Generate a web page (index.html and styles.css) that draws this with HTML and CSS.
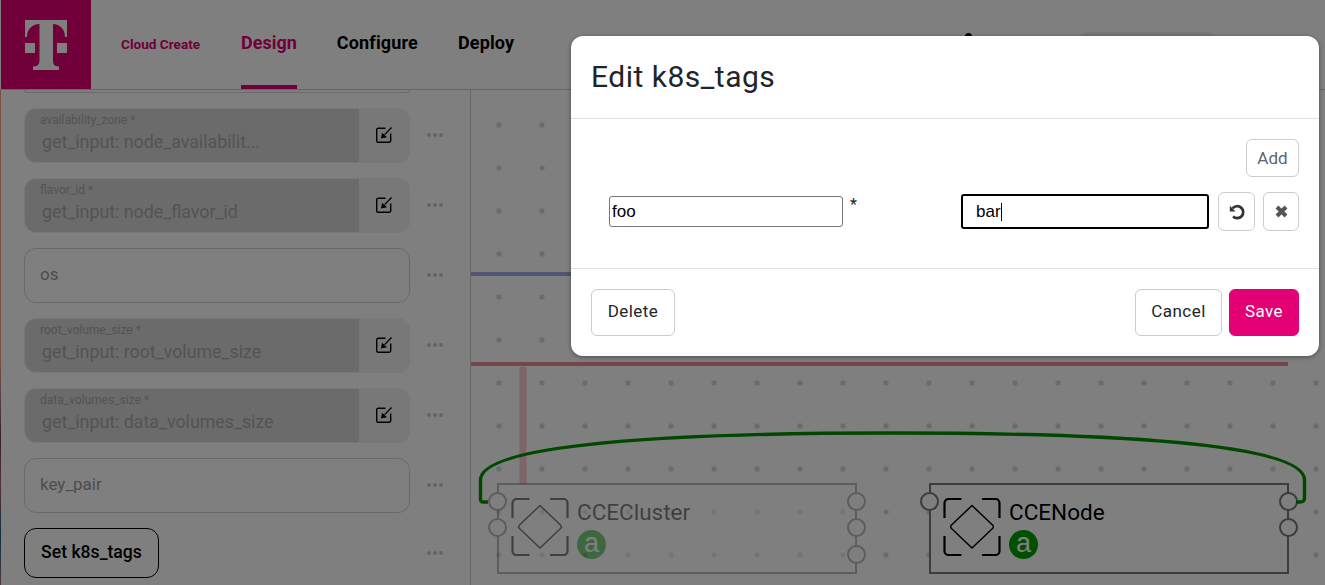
FILE: index.html
```html
<!DOCTYPE html>
<html lang="en">
<head>
<meta charset="utf-8">
<title>Cloud Create</title>
<link rel="stylesheet" href="styles.css">
</head>
<body>
<svg class="defs" width="0" height="0" aria-hidden="true">
  <symbol id="i-more" viewBox="0 0 16 4"><circle cx="2" cy="2" r="2"/><circle cx="8" cy="2" r="2"/><circle cx="14" cy="2" r="2"/></symbol>
  <symbol id="i-link" viewBox="0 0 16 16">
    <path d="M9.5 1.2H2.2A1.5 1.5 0 0 0 .7 2.7v11a1.5 1.5 0 0 0 1.5 1.5h11a1.5 1.5 0 0 0 1.5-1.5V6.5" fill="none" stroke="#000" stroke-width="1.4"/>
    <path d="M15.5.5 8.6 7.6" fill="none" stroke="#000" stroke-width="1.3"/>
    <path d="M5 11.5 6 5.8l5 4.5z" fill="#000"/>
  </symbol>
  <symbol id="i-type" viewBox="0 0 58 58">
    <path d="M1.5 20V5a4 4 0 0 1 4-4h13M39 1h13.500a4 4 0 0 1 4 4v15M1.500 38v15a4 4 0 0 0 4 4h13M39 57h13.500a4 4 0 0 0 4-4V38" fill="none" stroke="#000" stroke-width="2.200"/>
    <path d="M29 7.500 49.500 27a2.500 2.500 0 0 1 0 3.500L29 50 8.500 30.500a2.500 2.500 0 0 1 0-3.500z" fill="none" stroke="#000" stroke-width="1.500" stroke-linejoin="round"/>
  </symbol>
</svg>
<div class="app">
  <header class="topbar">
    <a class="logo" aria-label="Telekom">
      <svg width="90" height="89" viewBox="0 0 90 89"><path class="logo-t" d="M24 20H66V37H64C64 29 59 24.500 52 24V60C52 64.500 53 66 58 66.500V70H32V66.500C37 66 38.500 64.500 38.500 60V24C31 24.500 26 29 26 37H24ZM24 43H34V53H24ZM56 43H66V53H56Z"/></svg>
    </a>
    <span class="brand">Cloud Create</span>
    <nav class="nav">
      <a class="nav-item nav-active">Design</a>
      <a class="nav-item">Configure</a>
      <a class="nav-item">Deploy</a>
    </nav>
    <div class="topbar-right">
      <span class="blob"></span>
      <span class="pill"></span>
    </div>
  </header>
  <main class="workspace">
    <div class="rail"></div>
    <aside class="sidebar">
      <div class="field-tail"></div>
      <div class="row">
        <div class="field field-locked">
          <div class="locked-value"><label class="mini-label">availability_zone *</label><span class="locked-text">get_input: node_availabilit...</span></div>
          <button class="locked-btn"><svg class="icon-link"><use href="#i-link"/></svg></button>
        </div>
        <svg class="icon-more"><use href="#i-more"/></svg>
      </div>
      <div class="row">
        <div class="field field-locked">
          <div class="locked-value"><label class="mini-label">flavor_id *</label><span class="locked-text">get_input: node_flavor_id</span></div>
          <button class="locked-btn"><svg class="icon-link"><use href="#i-link"/></svg></button>
        </div>
        <svg class="icon-more"><use href="#i-more"/></svg>
      </div>
      <div class="row">
        <div class="field field-empty">os</div>
        <svg class="icon-more"><use href="#i-more"/></svg>
      </div>
      <div class="row">
        <div class="field field-locked">
          <div class="locked-value"><label class="mini-label">root_volume_size *</label><span class="locked-text">get_input: root_volume_size</span></div>
          <button class="locked-btn"><svg class="icon-link"><use href="#i-link"/></svg></button>
        </div>
        <svg class="icon-more"><use href="#i-more"/></svg>
      </div>
      <div class="row">
        <div class="field field-locked">
          <div class="locked-value"><label class="mini-label">data_volumes_size *</label><span class="locked-text">get_input: data_volumes_size</span></div>
          <button class="locked-btn"><svg class="icon-link"><use href="#i-link"/></svg></button>
        </div>
        <svg class="icon-more"><use href="#i-more"/></svg>
      </div>
      <div class="row">
        <div class="field field-empty">key_pair</div>
        <svg class="icon-more"><use href="#i-more"/></svg>
      </div>
      <div class="row row-set">
        <button class="set-btn">Set k8s_tags</button>
        <svg class="icon-more"><use href="#i-more"/></svg>
      </div>
    </aside>
    <section class="canvas">
      <svg class="wires" viewBox="471 90 854 495" width="854" height="495">
        <path class="wire-blue" d="M471 274H1288"/>
        <path class="wire-red" d="M471 364H1288"/>
        <path class="wire-pink" d="M523 367V484"/>
      </svg>
      <div class="node node-dim node-cluster">
        <span class="port port-l port-1"></span><span class="port port-l port-2"></span>
        <span class="port port-r port-1"></span><span class="port port-r port-2"></span><span class="port port-r port-3"></span>
        <svg class="node-icon"><use href="#i-type"/></svg>
        <div class="node-body">
          <div class="node-name">CCECluster</div>
          <div class="badge">a</div>
        </div>
      </div>
      <div class="node node-ccenode">
        <span class="port port-l port-1"></span>
        <span class="port port-r port-1"></span><span class="port port-r port-2"></span>
        <svg class="node-icon"><use href="#i-type"/></svg>
        <div class="node-body">
          <div class="node-name">CCENode</div>
          <div class="badge">a</div>
        </div>
      </div>
      <svg class="wires" viewBox="471 90 854 495" width="854" height="495">
        <path class="wire-green" d="M488 502H483Q480.500 502 480.500 499V480C480.500 443 680 433 892 433C1105 433 1304.500 443 1304.500 480V498Q1304.500 502 1300 502H1296"/>
      </svg>
    </section>
  </main>
  <div class="backdrop"></div>
  <div class="modal" role="dialog">
    <div class="modal-head"><h2 class="modal-title">Edit k8s_tags</h2></div>
    <div class="modal-body">
      <div class="add-line"><button class="btn btn-add">Add</button></div>
      <div class="tag-line">
        <div class="key-cell"><input class="key-input" value="foo"><span class="req">*</span></div>
        <div class="value-cell">
          <div class="value-input" role="textbox">bar<span class="caret"></span></div>
          <button class="btn btn-icon btn-undo"><svg width="16" height="16" viewBox="0 0 16 16"><path d="M3.500 4.500A6 6 0 1 1 4 12.500" fill="none" stroke="#333" stroke-width="2.700"/><path d="M.8 1.800V7.500H6.500z" fill="#333"/></svg></button>
          <button class="btn btn-icon btn-x"><svg width="13" height="13" viewBox="0 0 13 13"><path d="M2 2 11 11M11 2 2 11" stroke="#555" stroke-width="4"/></svg></button>
        </div>
      </div>
    </div>
    <div class="modal-foot">
      <button class="btn btn-foot btn-delete">Delete</button>
      <div class="foot-right">
        <button class="btn btn-foot btn-cancel">Cancel</button>
        <button class="btn btn-foot btn-save">Save</button>
      </div>
    </div>
  </div>
</div>
</body>
</html>
```
FILE: styles.css
```css
* { box-sizing: border-box; }
html, body { margin: 0; height: 100%; }
body { font-family: Roboto, "Noto Sans", sans-serif; color: #000; background: #fff; overflow: hidden; }
.defs { position: absolute; }
button { font-family: inherit; }

.app { position: relative; width: 1325px; height: 585px; overflow: hidden; display: flex; flex-direction: column; }

.topbar { height: 90px; flex: none; display: flex; align-items: stretch; border-bottom: 1px solid #ccc; padding-left: 1px; background: #fff; }
.logo { width: 90px; height: 89px; background: #e20074; display: block; flex: none; }
.logo svg { display: block; }
.logo-t { fill: #fff; }
.brand { margin-left: 30px; width: 120px; font-size: 13.600px; font-weight: 700; color: #e20074; line-height: 88px; white-space: nowrap; }
.nav { display: flex; gap: 40px; }
.nav-item { display: block; height: 89px; font-size: 18px; font-weight: 700; line-height: 86px; white-space: nowrap; letter-spacing: .15px; }
.nav-active { color: #e20074; border-bottom: 4px solid #e20074; letter-spacing: 0; }
.topbar-right { margin-left: auto; margin-right: 110px; display: flex; gap: 108px; align-items: flex-start; padding-top: 32px; }
.blob { width: 7px; height: 7px; border-radius: 50%; background: #000; margin-top: 1px; }
.pill { width: 135px; height: 30px; border-radius: 8px; background: #ececec; }

.workspace { flex: 1; display: flex; min-height: 0; }
.rail { width: 1px; flex: none; background: linear-gradient(#ff9a80 0 54%, #b08090 62%, #704060 70%, #b06070 80%, #206080 90%, #a07080 100%); }
.sidebar { width: 470px; flex: none; border-right: 1px solid #ccc; display: flex; flex-direction: column; gap: 15px; padding-left: 23px; background: #fff; overflow: hidden; }
.field-tail { width: 386px; height: 3px; border: 1px solid #d8d8d8; border-top: 0; border-radius: 0 0 12px 12px; flex: none; }
.row { display: flex; align-items: center; gap: 17px; height: 55px; flex: none; }
.row-set { height: 50px; }
.field { width: 386px; height: 55px; border-radius: 12px; flex: none; }
.field-empty { border: 1px solid #d4d4d4; padding-left: 15px; line-height: 51px; font-size: 17px; color: #999; }
.field-locked { display: flex; background: #f0f0f0; overflow: hidden; padding: 1px; }
.locked-value { width: 334px; height: 53px; background: #d6d6d6; border-radius: 11px 0 0 11px; padding: 4px 0 0 15px; display: flex; flex-direction: column; }
.mini-label { font-size: 12px; line-height: 14px; color: #a8a8a8; white-space: nowrap; }
.locked-text { font-size: 17.800px; line-height: 24px; color: #a8a8a8; margin: 3px 0 0 2px; white-space: nowrap; }
.locked-btn { flex: 1; border: 0; background: none; padding: 0 0 2px 0; display: flex; align-items: center; justify-content: center; }
.icon-link { width: 16px; height: 16px; display: block; }
.icon-more { width: 16px; height: 4px; fill: #c8c8c8; flex: none; margin-bottom: 1px; }
.set-btn { width: 135px; height: 50px; background: #fff; border: 1px solid #000; border-radius: 12px; font-size: 17.600px; font-weight: 500; color: #000; padding: 0 0 2px; flex: none; margin-right: 251px; }

.canvas { position: relative; flex: 1; min-width: 0; background-color: #fff; background-image: radial-gradient(circle, #d4d4d4 2.400px, transparent 3px); background-size: 43px 43px; background-position: 6.500px 13.500px; }
.wires { position: absolute; left: 0; top: 0; display: block; fill: none; pointer-events: none; }
.wire-blue { stroke: #a4abe0; stroke-width: 4; }
.wire-red { stroke: #e88c94; stroke-width: 4; }
.wire-pink { stroke: #f8c8ce; stroke-width: 7; }
.wire-green { stroke: #009000; stroke-width: 3.400; }

.node { position: absolute; top: 393px; width: 360px; height: 91px; border: 2px solid #787878; background: #fff; display: flex; }
.node-cluster { left: 26px; }
.node-ccenode { left: 458px; }
.node-dim { opacity: .5; }
.port { position: absolute; width: 19px; height: 19px; border-radius: 50%; background: #fff; border: 2px solid #787878; }
.port-l { left: -11px; }
.port-r { right: -11px; }
.port-1 { top: 7px; }
.port-2 { top: 33px; }
.port-3 { top: 60px; }
.node-icon { width: 58px; height: 58px; margin: 13px 0 0 12px; flex: none; }
.node-body { margin: 12px 0 0 8px; }
.node-name { font-size: 22.500px; line-height: 30px; white-space: nowrap; }
.badge { width: 29px; height: 29px; margin-top: 3px; border-radius: 50%; background: #00a000; color: #fff; font-family: "Liberation Sans", sans-serif; font-size: 27px; line-height: 26px; text-align: center; }

.backdrop { position: absolute; inset: 0; background: rgba(0,0,0,.5); }
.modal { position: absolute; left: 571px; top: 36px; width: 748px; height: 320px; background: #fff; border-radius: 12px; box-shadow: 0 1px 4px rgba(0,0,0,.4); display: flex; flex-direction: column; }
.modal-head { height: 83px; border-bottom: 1px solid #dee2e6; padding: 21px 0 0 20px; flex: none; }
.modal-title { margin: 0; font-size: 30px; line-height: 40px; font-weight: 400; color: #212529; letter-spacing: .5px; }
.modal-body { height: 150px; border-bottom: 1px solid #dee2e6; padding: 20px 20px 0 38px; flex: none; }
.add-line { display: flex; justify-content: flex-end; height: 38px; }
.btn { background: #fff; border: 1px solid #ccc; border-radius: 6px; color: #212529; padding: 0; }
.btn-add { width: 53px; height: 38px; font-size: 17px; color: #5a6578; }
.tag-line { display: flex; justify-content: space-between; margin-top: 15px; }
.key-cell { display: flex; align-items: flex-start; margin-top: 4px; }
.key-input { width: 234px; height: 31px; border: 1px solid #767676; border-radius: 3px; padding: 0 2px; font: 17px "Liberation Sans", sans-serif; color: #000; background: #fff; outline: 0; }
.req { margin-left: 7px; font-size: 16px; line-height: 18px; color: #212529; }
.value-cell { display: flex; gap: 8px; align-items: flex-start; }
.value-input { width: 248px; height: 35px; margin: 2px 1px 0 0; border: 2px solid #000; border-radius: 3px; padding-left: 13px; font: 17px/31px "Liberation Sans", sans-serif; color: #000; }
.caret { display: inline-block; width: 1px; height: 18px; background: #000; vertical-align: -4px; }
.btn-icon { height: 39px; display: flex; align-items: center; justify-content: center; }
.btn-undo { width: 37px; }
.btn-x { width: 36px; }
.modal-foot { flex: 1; display: flex; justify-content: space-between; padding: 20px 20px 0; }
.foot-right { display: flex; gap: 7px; }
.btn-foot { height: 47px; padding: 0 0 3px; font-size: 17px; letter-spacing: .45px; }
.btn-delete { width: 84px; }
.btn-cancel { width: 87px; }
.btn-save { width: 70px; background: #e20074; border-color: #e20074; color: #fff; }
```
